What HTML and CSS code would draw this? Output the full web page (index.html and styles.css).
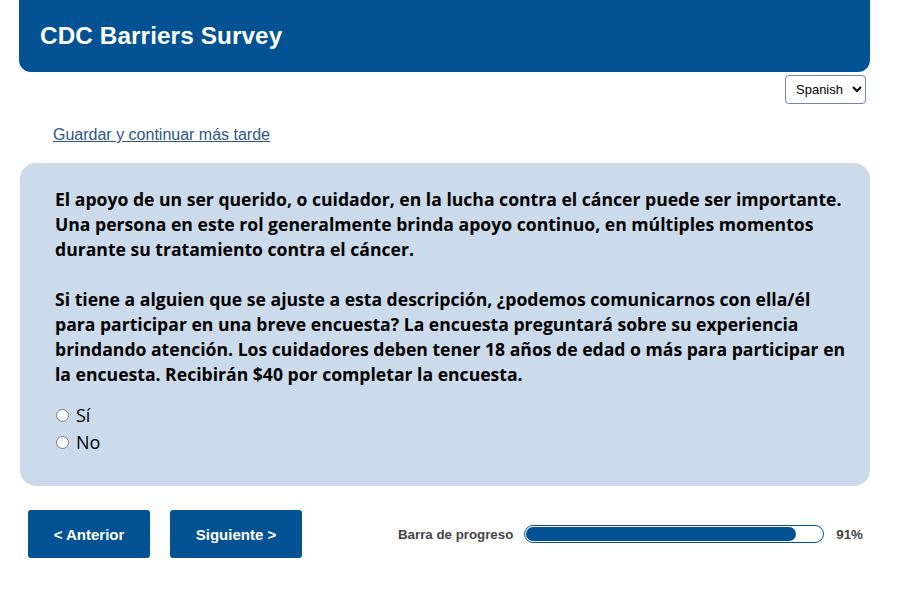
FILE: index.html
```html
<!DOCTYPE html>
<html lang="es">
<head>
<meta charset="utf-8">
<title>CDC Barriers Survey</title>
<link rel="stylesheet" href="styles.css">
</head>
<body>
<div class="page">
  <header class="banner"><h1>CDC Barriers Survey</h1></header>
  <div class="lang-row">
    <select class="lang"><option>Spanish</option></select>
  </div>
  <div class="save-row"><a href="#" class="save">Guardar y continuar más tarde</a></div>
  <section class="card">
    <p>El apoyo de un ser querido, o cuidador, en la lucha contra el cáncer puede ser importante. Una persona en este rol generalmente brinda apoyo continuo, en múltiples momentos durante su tratamiento contra el cáncer.</p>
    <p>Si tiene a alguien que se ajuste a esta descripción, ¿podemos comunicarnos con ella/él para participar en una breve encuesta? La encuesta preguntará sobre su experiencia brindando atención. Los cuidadores deben tener 18 años de edad o más para participar en la encuesta. Recibirán $40 por completar la encuesta.</p>
    <div class="options">
      <label class="opt"><input type="radio" name="q"> Sí</label>
      <label class="opt"><input type="radio" name="q"> No</label>
    </div>
  </section>
  <div class="nav">
    <button class="btn btn-prev">&lt; Anterior</button>
    <button class="btn btn-next">Siguiente &gt;</button>
    <div class="progress">
      <span class="plabel">Barra de progreso</span>
      <div class="bar"><div class="fill" style="width:91%"></div></div>
      <span class="pct">91%</span>
    </div>
  </div>
</div>
</body>
</html>
```
FILE: styles.css
```css
* { box-sizing: border-box; }
html, body { margin: 0; padding: 0; background: #fff; }
body { font-family: "Liberation Sans", Arial, sans-serif; color: #000; }
.page { width: 851px; margin-left: 19px; }
.banner {
  background: #025294;
  height: 72px;
  border-radius: 0 0 12px 12px;
  display: flex;
  align-items: center;
  padding-left: 21px;
}
.banner h1 {
  margin: 0;
  color: #fff;
  font-size: 24.3px;
  font-weight: bold;
  font-family: "Liberation Sans", Arial, sans-serif;
  letter-spacing: 0.1px;
}
.lang-row { display: flex; justify-content: flex-end; padding-right: 4px; margin-top: 3px; }
.lang {
  width: 81px; height: 29px;
  border: 1px solid #6a86b4;
  border-radius: 4px;
  background: #fff;
  font-family: "Liberation Sans", Arial, sans-serif;
  font-size: 13px;
  padding-left: 6px;
}
.save-row { padding-left: 34px; margin-top: 22px; height: 37px; }
.save { color: #2c5687; font-size: 16px; text-decoration: underline; }
.card {
  margin-left: 1px;
  background: #cbdbeb;
  border-radius: 16px;
  padding: 24px 24px 32px 35px;
  font-family: "Open Sans", sans-serif;
}
.card p {
  margin: 0 0 25px 0;
  font-weight: bold;
  font-size: 17.6px;
  line-height: 25px;
  color: #000;
}
.options { margin-top: -9px; display: flex; flex-direction: column; gap: 3px; }
.opt { display: flex; align-items: center; font-size: 18px; line-height: 24px; gap: 7px; }
.opt input { margin: 0 0 0 1px; width: 13px; height: 13px; }
.nav { display: flex; align-items: center; margin-top: 24px; padding-left: 9px; }
.btn {
  background: #025294;
  color: #fff;
  border: none;
  border-radius: 3px;
  height: 48px;
  font-family: "Liberation Sans", Arial, sans-serif;
  font-weight: bold;
  font-size: 15px;
}
.btn-prev { width: 122px; }
.btn-next { width: 132px; margin-left: 20px; }
.progress { display: flex; align-items: center; margin-left: 96px; }
.plabel { font-size: 13.3px; font-weight: bold; color: #444; }
.bar {
  width: 300px; height: 18px;
  margin-left: 11px;
  border: 1px solid #025294;
  border-radius: 9px;
  padding: 1px;
  background: #fff;
}
.fill { height: 100%; background: #025294; border-radius: 8px; }
.pct { margin-left: 12px; font-size: 13.3px; font-weight: bold; color: #444; }
```
